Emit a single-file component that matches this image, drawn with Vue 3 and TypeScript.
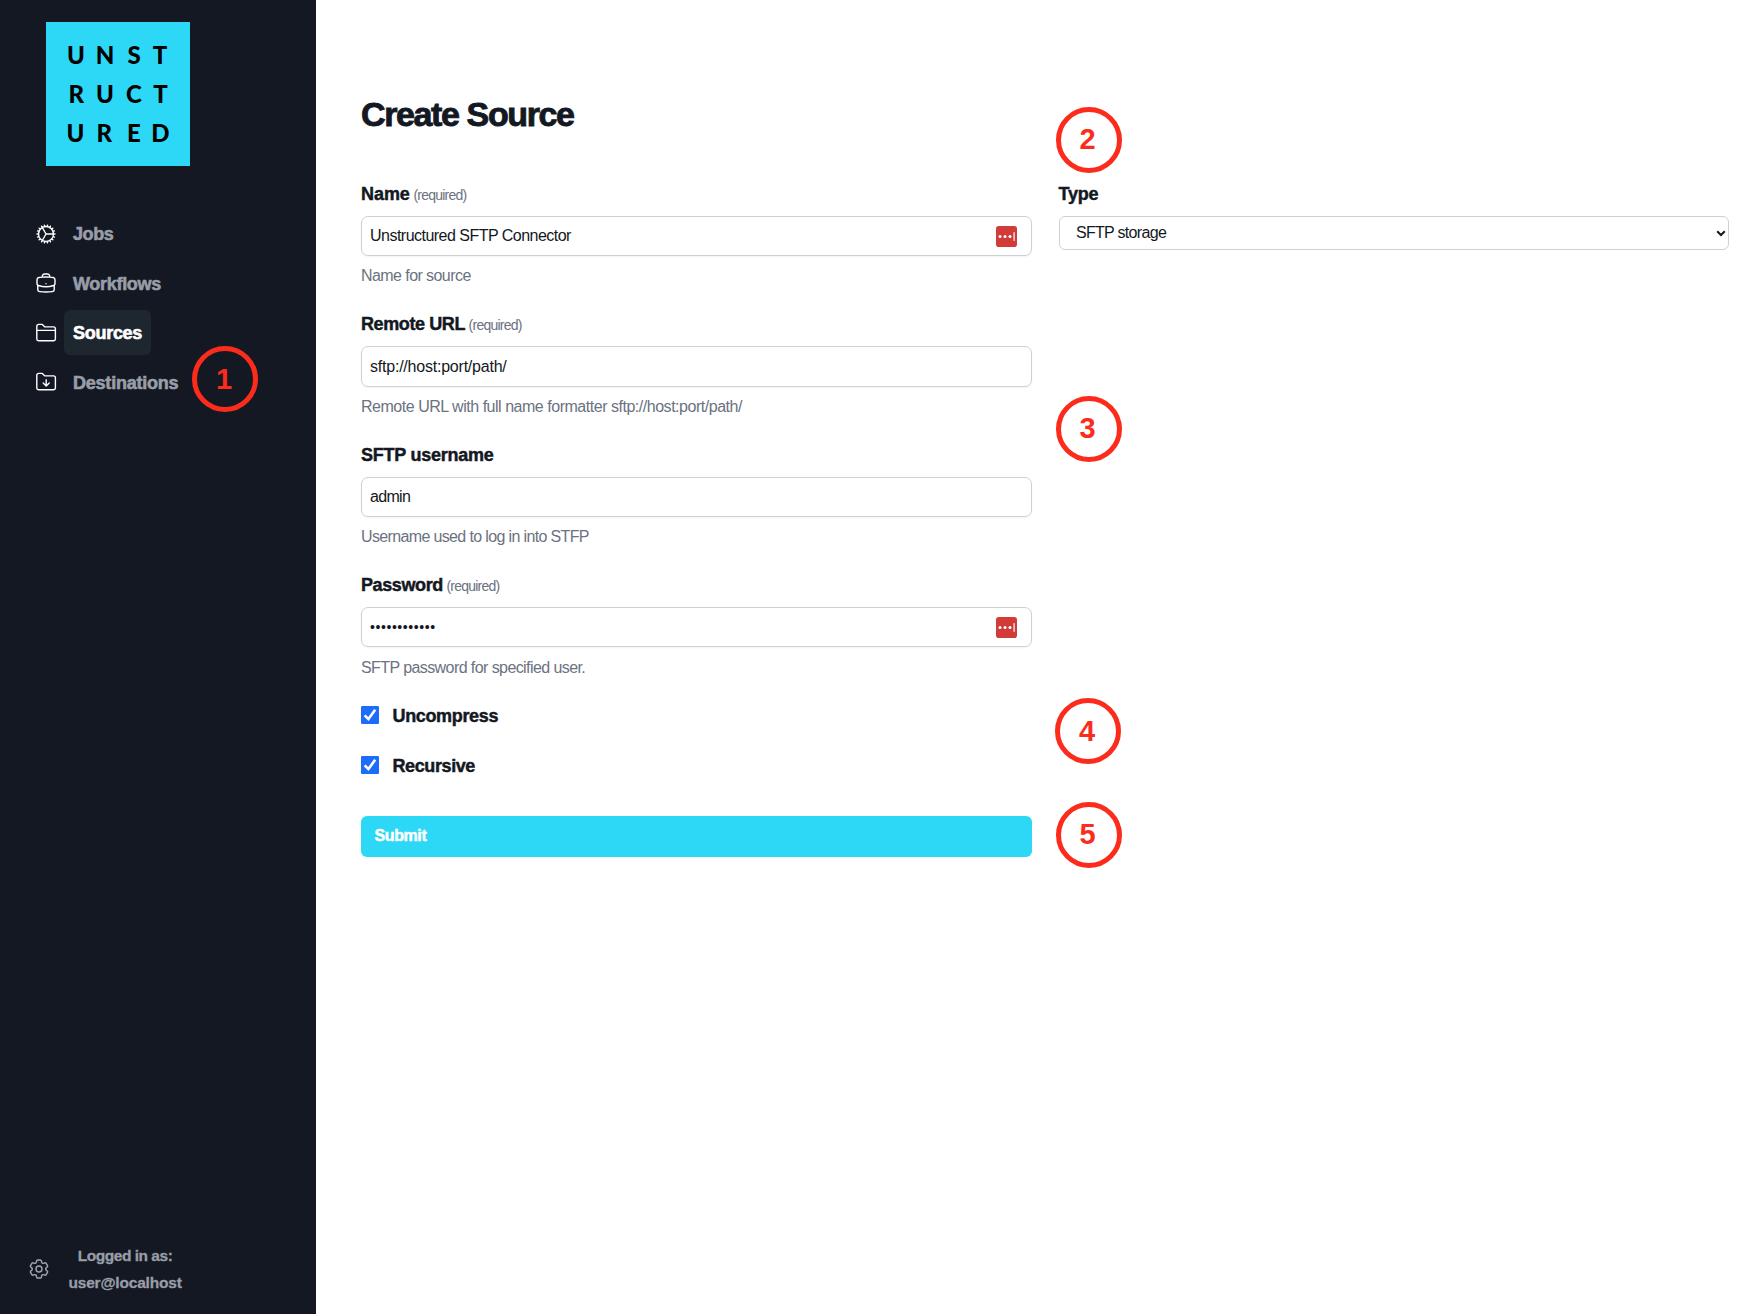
<script setup lang="ts">
interface NavItem {
  label: string
  icon: 'cog' | 'case' | 'folder' | 'inbox'
  active?: boolean
  tracking: number
}

interface Field {
  label: string
  required?: boolean
  value: string
  help: string
  secret?: boolean
  manager?: boolean
  tracking: [number, number, number]
}

interface Glyph {
  ch: string
  x: number
  y: number
}

const logo: Glyph[] = [
  { ch: 'U', x: 30, y: 42 }, { ch: 'N', x: 59, y: 42 }, { ch: 'S', x: 88, y: 42 }, { ch: 'T', x: 114, y: 42 },
  { ch: 'R', x: 30.2, y: 81 }, { ch: 'U', x: 59, y: 81 }, { ch: 'C', x: 88, y: 81 }, { ch: 'T', x: 114.5, y: 81 },
  { ch: 'U', x: 29.5, y: 120 }, { ch: 'R', x: 58.3, y: 120 }, { ch: 'E', x: 88, y: 120 }, { ch: 'D', x: 114.3, y: 120 },
]

const nav: NavItem[] = [
  { label: 'Jobs', icon: 'cog', tracking: -0.4 },
  { label: 'Workflows', icon: 'case', tracking: -0.3 },
  { label: 'Sources', icon: 'folder', active: true, tracking: -0.28 },
  { label: 'Destinations', icon: 'inbox', tracking: -0.22 },
]

const iconPaths: Record<NavItem['icon'], string> = {
  cog: 'M4.5 12a7.5 7.5 0 0015 0m-15 0a7.5 7.5 0 1115 0m-15 0H3m16.5 0H21m-1.5 0H12m-8.457 3.077l1.41-.513m14.095-5.13l1.41-.513M5.106 17.785l1.15-.964m11.49-9.642l1.149-.964M7.501 19.795l.75-1.3m7.5-12.99l.75-1.3m-6.063 16.658l.26-1.477m2.605-14.772l.26-1.477m0 17.726l-.26-1.477M10.698 4.614l-.26-1.477M16.5 19.794l-.75-1.299M7.5 4.205L12 12m6.894 5.785l-1.149-.964M6.256 7.178l-1.15-.964m15.352 8.864l-1.41-.513M4.954 9.435l-1.41-.514M12.002 12l-3.75 6.495',
  case: 'M20.25 14.15v4.25c0 1.094-.787 2.036-1.872 2.18-2.087.277-4.216.42-6.378.42s-4.291-.143-6.378-.42c-1.085-.144-1.872-1.086-1.872-2.18v-4.25m16.5 0a2.18 2.18 0 00.75-1.661V8.706c0-1.081-.768-2.015-1.837-2.175a48.114 48.114 0 00-3.413-.387m4.5 8.006c-.194.165-.42.295-.673.38A23.978 23.978 0 0112 15.75c-2.648 0-5.195-.429-7.577-1.22a2.016 2.016 0 01-.673-.38m0 0A2.18 2.18 0 013 12.489V8.706c0-1.081.768-2.015 1.837-2.175a48.111 48.111 0 013.413-.387m7.5 0V5.25A2.25 2.25 0 0013.5 3h-3a2.25 2.25 0 00-2.25 2.25v.894m7.5 0a48.667 48.667 0 00-7.5 0M12 12.75h.008v.008H12v-.008z',
  folder: 'M2.8 18V5.2a1.8 1.8 0 011.8-1.8H8.3l2.6 2.5h8.6a1.9 1.9 0 011.9 1.9V18a1.7 1.7 0 01-1.7 1.7H4.5A1.7 1.7 0 012.8 18zM2.8 9.4h18.6',
  inbox: 'M2.8 18V5.2a1.8 1.8 0 011.8-1.8H8.3l2.6 2.5h8.6a1.9 1.9 0 011.9 1.9V18a1.7 1.7 0 01-1.7 1.7H4.5A1.7 1.7 0 012.8 18zM12.2 9.8v6m-3-2.7l3 2.8 3-2.8',
}

const fields: Field[] = [
  { label: 'Name', required: true, value: 'Unstructured SFTP Connector', help: 'Name for source', manager: true, tracking: [-0.05, -0.52, -0.57] },
  { label: 'Remote URL', required: true, value: 'sftp://host:port/path/', help: 'Remote URL with full name formatter sftp://host:port/path/', tracking: [-0.4, -0.22, -0.475] },
  { label: 'SFTP username', value: 'admin', help: 'Username used to log in into STFP', tracking: [-0.25, -0.7, -0.64] },
  { label: 'Password', required: true, value: '••••••••••••', help: 'SFTP password for specified user.', secret: true, manager: true, tracking: [-0.4, 0.57, -0.58] },
]

const options = [
  { label: 'Uncompress', tracking: -0.35 },
  { label: 'Recursive', tracking: -0.4 },
]

const spacing = (n: number) => ({ letterSpacing: `${n}px` })
</script>

<template>
  <div class="page">
    <aside class="sidebar">
      <svg class="logo" viewBox="0 0 144 144">
        <rect width="144" height="144" fill="#2cd8f6" />
        <text v-for="(g, i) in logo" :key="i" :x="g.x" :y="g.y" text-anchor="middle">{{ g.ch }}</text>
      </svg>
      <nav class="nav">
        <a v-for="item in nav" :key="item.label" class="nav-item" :class="{ active: item.active }">
          <svg class="icon" viewBox="0 0 24 24"><path :d="iconPaths[item.icon]" /></svg>
          <span class="nav-label" :style="spacing(item.tracking)">{{ item.label }}</span>
        </a>
      </nav>
      <footer class="account">
        <svg class="icon gear" viewBox="0 0 24 24">
          <path d="M9.594 3.94c.09-.542.56-.94 1.11-.94h2.593c.55 0 1.02.398 1.11.94l.213 1.281c.063.374.313.686.645.87.074.04.147.083.22.127.324.196.72.257 1.075.124l1.217-.456a1.125 1.125 0 011.37.49l1.296 2.247a1.125 1.125 0 01-.26 1.431l-1.003.827c-.293.24-.438.613-.431.992a6.759 6.759 0 010 .255c-.007.378.138.75.43.99l1.005.828c.424.35.534.954.26 1.43l-1.298 2.247a1.125 1.125 0 01-1.369.491l-1.217-.456c-.355-.133-.75-.072-1.076.124a6.57 6.57 0 01-.22.128c-.331.183-.581.495-.644.869l-.213 1.28c-.09.543-.56.941-1.11.941h-2.594c-.55 0-1.02-.398-1.11-.94l-.213-1.281c-.062-.374-.312-.686-.644-.87a6.52 6.52 0 01-.22-.127c-.325-.196-.72-.257-1.076-.124l-1.217.456a1.125 1.125 0 01-1.369-.49l-1.297-2.247a1.125 1.125 0 01.26-1.431l1.004-.827c.292-.24.437-.613.43-.992a6.932 6.932 0 010-.255c.007-.378-.138-.75-.43-.99l-1.004-.828a1.125 1.125 0 01-.26-1.43l1.297-2.247a1.125 1.125 0 011.37-.491l1.216.456c.356.133.751.072 1.076-.124.072-.044.146-.087.22-.128.332-.183.582-.495.644-.869l.214-1.281zM15 12a3 3 0 11-6 0 3 3 0 016 0z" />
        </svg>
        <div class="who">
          <span class="who-title">Logged in as:</span>
          <span class="who-user">user@localhost</span>
        </div>
      </footer>
    </aside>

    <main class="main">
      <h1 class="title">Create Source</h1>
      <div class="columns">
        <form class="form" @submit.prevent>
          <div v-for="f in fields" :key="f.label" class="field">
            <div class="label-row">
              <span class="label" :style="spacing(f.tracking[0])">{{ f.label }}</span>
              <span v-if="f.required" class="required">(required)</span>
            </div>
            <div class="input">
              <span :class="{ secret: f.secret }" :style="spacing(f.tracking[1])">{{ f.value }}</span>
              <svg v-if="f.manager" class="manager" viewBox="0 0 21 21">
                <rect width="21" height="21" rx="2.8" fill="#d13b38" />
                <circle cx="4" cy="10.5" r="1.5" fill="#fff" />
                <circle cx="9" cy="10.5" r="1.5" fill="#fff" />
                <circle cx="14" cy="10.5" r="1.5" fill="#fff" />
                <rect x="17.5" y="6.2" width="1.2" height="8.6" fill="#fff" />
              </svg>
            </div>
            <div class="help" :style="spacing(f.tracking[2])">{{ f.help }}</div>
          </div>
          <div class="checks">
            <div v-for="o in options" :key="o.label" class="check">
              <svg class="box" viewBox="0 0 18 18">
                <rect width="18" height="18" rx="1.2" fill="#1d6dfb" />
                <path d="M3.6 9.4l3.8 3.6L14.2 3.8" fill="none" stroke="#fff" stroke-width="2.6" />
              </svg>
              <span class="label" :style="spacing(o.tracking)">{{ o.label }}</span>
            </div>
          </div>
          <div class="submit">Submit</div>
        </form>
        <section class="form">
          <div class="label-row"><span class="label type">Type</span></div>
          <div class="select">
            <span>SFTP storage</span>
            <svg class="chevron" viewBox="0 0 10 7"><path d="M1.2 1.3L5 5l3.8-3.7" /></svg>
          </div>
        </section>
      </div>
    </main>

    <span class="pin pin-1">1</span>
    <span class="pin pin-2">2</span>
    <span class="pin pin-3">3</span>
    <span class="pin pin-4">4</span>
    <span class="pin pin-5">5</span>
  </div>
</template>

<style>
body {
  margin: 0;
  background: #fff;
}
</style>

<style scoped>
.page {
  position: relative;
  display: flex;
  width: 100%;
  height: 1314px;
  overflow: hidden;
  box-sizing: border-box;
  font-family: "Liberation Sans", Arial, sans-serif;
  color: #131822;
}
.page * {
  box-sizing: border-box;
}
.sidebar {
  display: flex;
  flex-direction: column;
  flex: none;
  width: 316px;
  padding-top: 22px;
  background: #131822;
}
.logo {
  width: 144px;
  height: 144px;
  margin-left: 46px;
  font: 900 24px Lato, sans-serif;
}
.nav {
  display: flex;
  flex-direction: column;
  gap: 4.5px;
  padding: 45px 0 0 34px;
}
.nav-item {
  display: flex;
  align-items: center;
  height: 45px;
  gap: 6px;
  color: #989da8;
}
.nav-label {
  height: 45px;
  padding: 1px 9px 0;
  border-radius: 6px;
  font-size: 18px;
  font-weight: 700;
  line-height: 45px;
  -webkit-text-stroke: 0.6px currentColor;
}
.active .nav-label {
  background: #1e2630;
  color: #fff;
}
.icon {
  flex: none;
  width: 24px;
  height: 24px;
  fill: none;
  stroke: #fff;
  stroke-width: 1.4;
  stroke-linecap: round;
  stroke-linejoin: round;
}
.account {
  display: flex;
  align-items: center;
  margin: auto 0 18px 27px;
}
.gear {
  stroke: #a1a6b0;
}
.who {
  display: flex;
  flex-direction: column;
  align-items: center;
  margin-left: 17.5px;
  font-size: 15.5px;
  font-weight: 700;
  line-height: 27px;
  color: #989da8;
  -webkit-text-stroke: 0.3px currentColor;
}
.who-title {
  letter-spacing: -0.48px;
}
.who-user {
  letter-spacing: -0.2px;
}
.main {
  flex: 1;
  padding: 93.5px 34px 0 45px;
}
.title {
  margin: 0 0 46.5px;
  font-size: 34px;
  font-weight: 700;
  line-height: 40px;
  letter-spacing: -1.38px;
  -webkit-text-stroke: 0.9px currentColor;
}
.columns {
  display: grid;
  grid-template-columns: 1fr 1fr;
  gap: 27px;
  align-items: start;
}
.field {
  height: 130.4px;
}
.label-row {
  display: flex;
  align-items: baseline;
  gap: 3.6px;
  height: 28px;
  line-height: 28px;
}
.label {
  font-size: 18px;
  font-weight: 700;
  -webkit-text-stroke: 0.45px currentColor;
}
.type {
  letter-spacing: -0.25px;
}
.required {
  font-size: 14px;
  letter-spacing: -0.77px;
  color: #6b7280;
}
.input {
  display: flex;
  align-items: center;
  justify-content: space-between;
  height: 40.2px;
  margin-top: 8.1px;
  padding: 0 13.4px 0 8px;
  border: 1px solid #cdd0d6;
  border-radius: 7px;
  box-shadow: 0 1px 2px rgba(0, 0, 0, 0.05);
  font-size: 16px;
  white-space: nowrap;
}
.secret {
  font-size: 14px;
}
.manager {
  width: 21px;
  height: 21px;
}
.help {
  margin-top: 8.1px;
  font-size: 16px;
  line-height: 24px;
  white-space: nowrap;
  color: #6b7280;
}
.checks {
  display: flex;
  flex-direction: column;
  gap: 22.2px;
}
.check {
  display: flex;
  align-items: center;
  gap: 13.5px;
  height: 28px;
}
.check .label {
  padding-top: 2px;
}
.box {
  width: 18px;
  height: 18px;
  margin-bottom: 1px;
}
.submit {
  height: 41px;
  margin-top: 36px;
  padding-left: 13.5px;
  border-radius: 6px;
  background: #2cd8f6;
  color: #fff;
  font-size: 16px;
  font-weight: 700;
  line-height: 39px;
  letter-spacing: -0.4px;
  -webkit-text-stroke: 0.5px currentColor;
}
.select {
  display: flex;
  align-items: center;
  justify-content: space-between;
  height: 34px;
  margin-top: 8px;
  padding: 0 2px 0 16.4px;
  border: 1px solid #cdd0d6;
  border-radius: 6px;
  font-size: 16px;
  letter-spacing: -0.68px;
}
.chevron {
  width: 10px;
  height: 7px;
  fill: none;
  stroke: #131822;
  stroke-width: 2;
}
.pin {
  position: absolute;
  display: flex;
  align-items: center;
  justify-content: center;
  width: 66px;
  height: 66px;
  padding-right: 2px;
  border: 5px solid #fb2c1b;
  border-radius: 50%;
  color: #fb2c1b;
  font-size: 29px;
  font-weight: 700;
  line-height: 1;
}
.pin-1 { left: 192px; top: 346px; }
.pin-2 { left: 1055.5px; top: 106.5px; }
.pin-3 { left: 1055.5px; top: 395.5px; }
.pin-4 { left: 1055px; top: 698px; }
.pin-5 { left: 1055.5px; top: 801.5px; }
</style>
